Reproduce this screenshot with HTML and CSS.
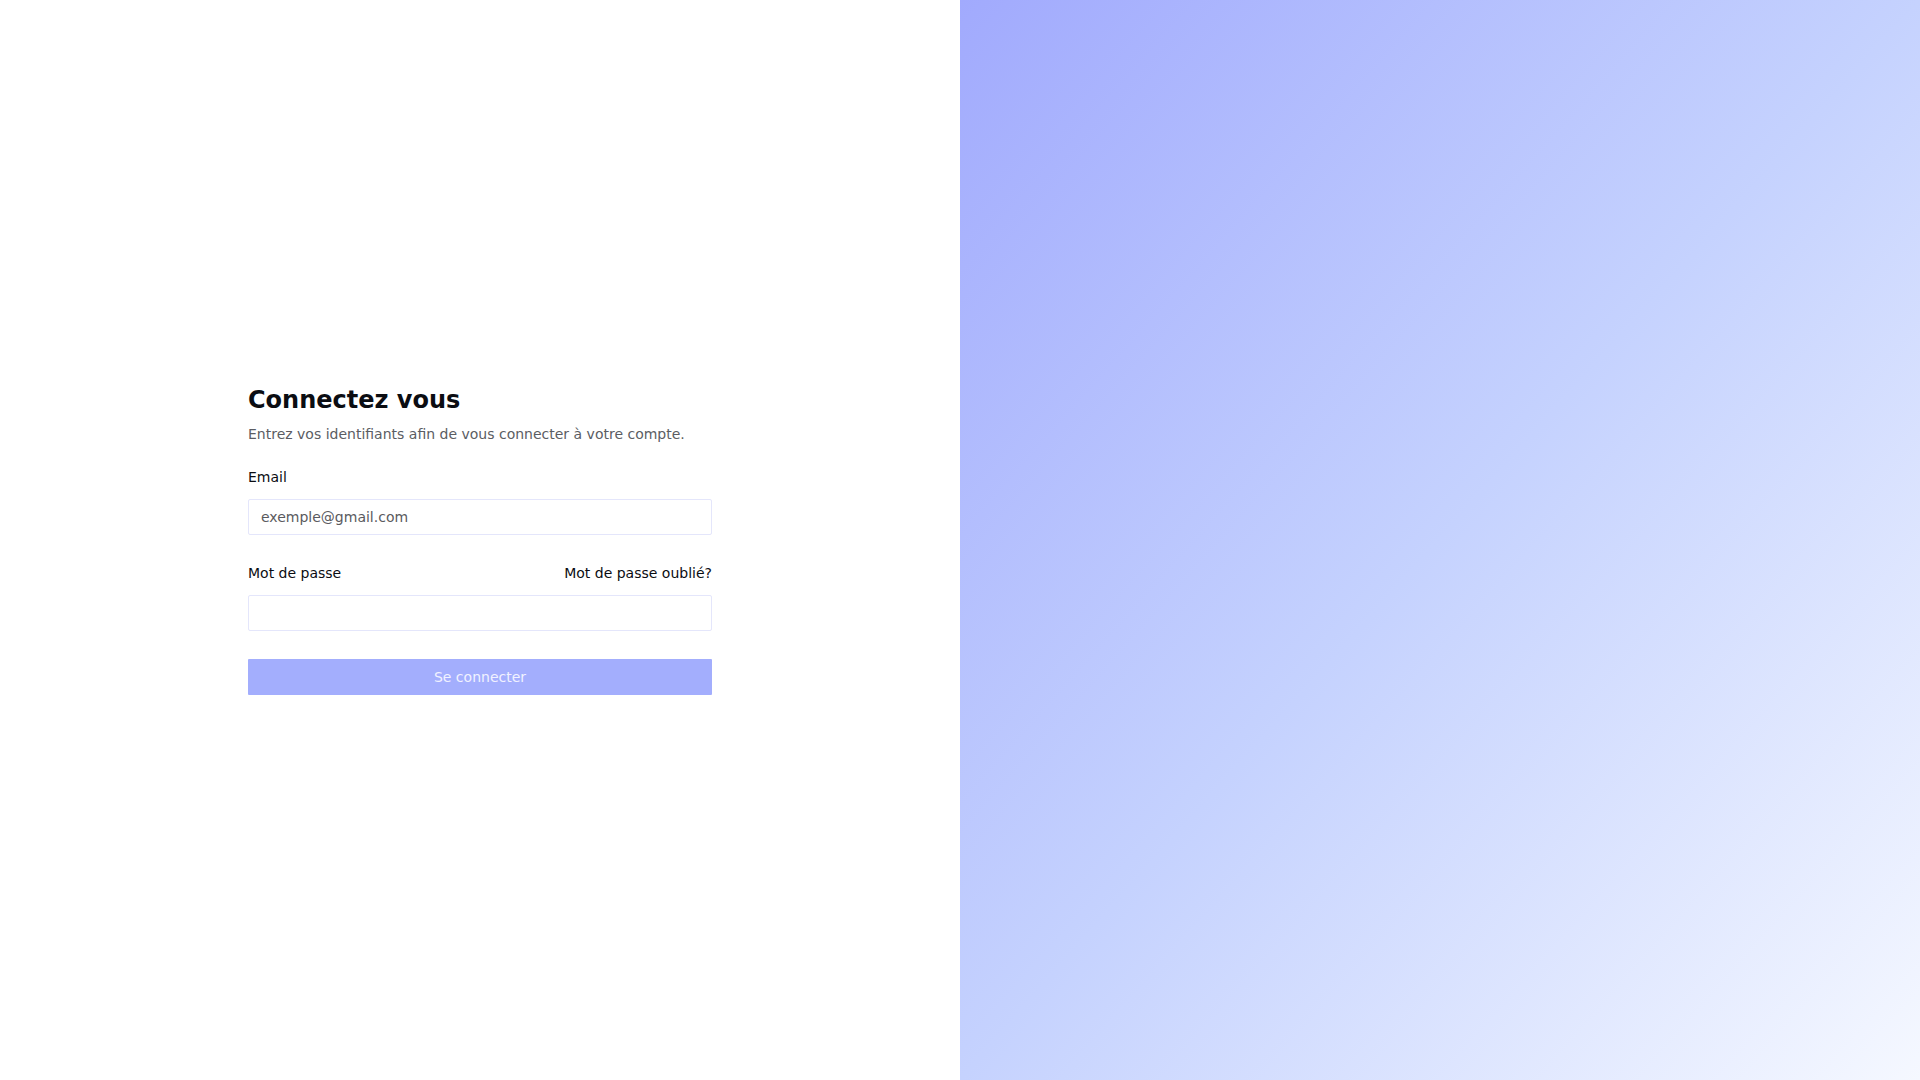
FILE: index.html
```html
<!DOCTYPE html>
<html lang="fr">
<head>
<meta charset="utf-8">
<title>Connexion</title>
<link rel="stylesheet" href="styles.css">
</head>
<body>
<div class="page">
  <main class="left">
    <form class="form">
      <h1 class="title">Connectez vous</h1>
      <p class="subtitle">Entrez vos identifiants afin de vous connecter à votre compte.</p>
      <div class="field">
        <label class="label" for="email">Email</label>
        <input class="input" id="email" type="email" placeholder="exemple@gmail.com">
      </div>
      <div class="field field-pw">
        <div class="label-row">
          <label class="label" for="pw">Mot de passe</label>
          <a class="forgot" href="#">Mot de passe oublié?</a>
        </div>
        <input class="input" id="pw" type="password">
      </div>
      <button class="btn" type="button">Se connecter</button>
    </form>
  </main>
  <aside class="right"></aside>
</div>
</body>
</html>
```

FILE: styles.css
```css
* { box-sizing: border-box; }
html, body { margin: 0; padding: 0; height: 100%; }
body {
  font-family: "DejaVu Sans", Verdana, sans-serif;
  background: #ffffff;
  color: #0b0d12;
}
.page {
  display: grid;
  grid-template-columns: 960px 960px;
  height: 1080px;
}
.left {
  display: flex;
  align-items: center;
  justify-content: center;
  background: #ffffff;
}
.right {
  background: linear-gradient(to bottom right, #a1aafd 0%, #c5d2fe 50%, #f5f8ff 100%);
}
.form {
  width: 464px;
  display: flex;
  flex-direction: column;
  margin-bottom: 2px;
}
.title {
  margin: 0;
  font-size: 24px;
  line-height: 32px;
  font-weight: 700;
  color: #0b0d12;
}
.subtitle {
  margin: 8px 0 0;
  font-size: 14px;
  line-height: 20px;
  color: #5b5d63;
}
.field {
  display: flex;
  flex-direction: column;
  gap: 12px;
  margin-top: 23px;
}
.field-pw { margin-top: 28px; }
.label-row {
  display: flex;
  justify-content: space-between;
  align-items: center;
}
.label {
  font-size: 14px;
  line-height: 20px;
  color: #0b0d12;
}
.forgot {
  font-size: 14px;
  line-height: 20px;
  color: #0b0d12;
  text-decoration: none;
}
.input {
  height: 36px;
  width: 100%;
  border: 1px solid #e4e6fb;
  border-radius: 2px;
  padding: 0 12px;
  font-family: "DejaVu Sans", Verdana, sans-serif;
  font-size: 14px;
  color: #333;
  background: #fff;
  outline: none;
}
.input::placeholder { color: #5a5a5e; opacity: 1; }
.btn {
  margin-top: 28px;
  height: 36px;
  width: 100%;
  border: none;
  border-radius: 1px;
  background: #a3aefd;
  color: #f1f2ff;
  font-family: "DejaVu Sans", Verdana, sans-serif;
  font-size: 14px;
  cursor: pointer;
}
```
